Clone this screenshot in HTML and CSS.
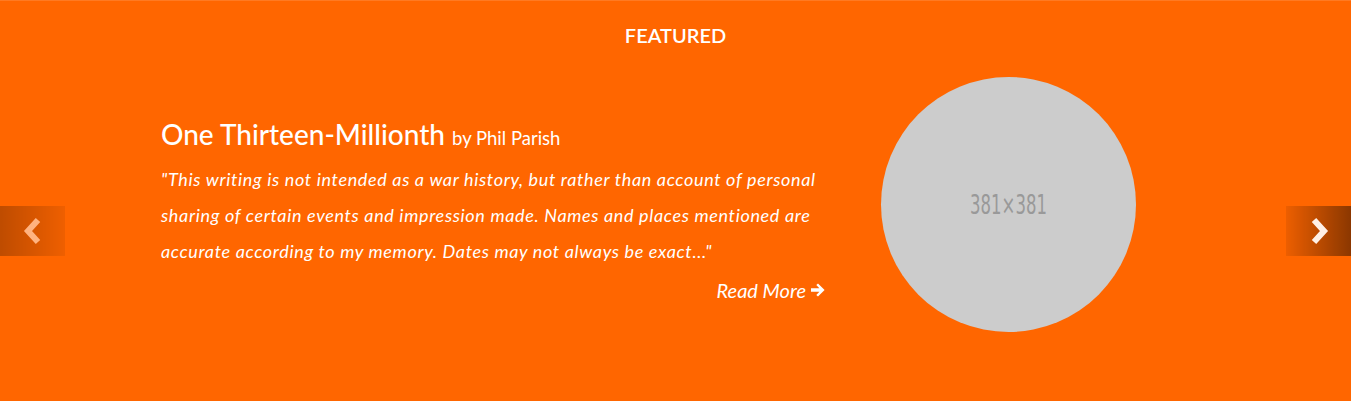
FILE: index.html
```html
<!DOCTYPE html>
<html>
<head>
<meta charset="utf-8">
<link rel="stylesheet" href="styles.css">
</head>
<body>
<section class="featured">
  <h2 class="featured-title">FEATURED</h2>
  <div class="slide">
    <div class="text-col">
      <h3 class="book-title">One Thirteen-Millionth <small>by Phil Parish</small></h3>
      <p class="excerpt">"This writing is not intended as a war history, but rather than account of personal sharing of certain events and impression made. Names and places mentioned are accurate according to my memory. Dates may not always be exact..."</p>
      <div class="more-row"><a class="read-more" href="#">Read More<svg class="arrow" viewBox="0 0 16 16" width="16" height="16"><path d="M1 6.2h8.4L6.3 3.1 8 1.4 14.6 8 8 14.6 6.3 12.9l3.1-3.1H1z" fill="#fff"/></svg></a></div>
    </div>
    <div class="img-col">
      <div class="circle"><span>381×381</span></div>
    </div>
  </div>
  <a class="control left" href="#"><svg viewBox="0 0 20 28" width="20" height="28"><path d="M15 3 L5 14 L15 25" fill="none" stroke="#fff" stroke-width="6" stroke-linejoin="miter"/></svg></a>
  <a class="control right" href="#"><svg viewBox="0 0 20 28" width="20" height="28"><path d="M5 3 L15 14 L5 25" fill="none" stroke="#fff" stroke-width="6" stroke-linejoin="miter"/></svg></a>
</section>
</body>
</html>
```
FILE: styles.css
```css
html, body {
  margin: 0;
  padding: 0;
  background: #ff6600;
}
.featured {
  position: relative;
  height: 401px;
  box-sizing: border-box;
  background: #ff6600;
  color: #fff;
  font-family: Lato, "Noto Sans", sans-serif;
  border-top: 1px solid #ff7a22;
  overflow: hidden;
}
.featured-title {
  margin: 0;
  padding-top: 22px;
  text-align: center;
  font-size: 20px;
  font-weight: 600;
  line-height: 24px;
}
.slide {
  display: flex;
  align-items: flex-start;
  margin-top: 30px;
}
.text-col {
  margin-left: 161px;
  width: 665px;
  padding-top: 40px;
}
.book-title {
  margin: 0;
  font-size: 28px;
  font-weight: 500;
  line-height: 34px;
}
.book-title small {
  font-size: 18.5px;
  font-weight: 400;
}
.excerpt {
  margin: 6px 0 0;
  font-size: 18px;
  letter-spacing: 0.65px;
  font-style: italic;
  line-height: 36px;
}
.more-row {
  display: flex;
  justify-content: flex-end;
  margin-top: 9px;
}
.read-more {
  color: #fff;
  text-decoration: none;
  font-style: italic;
  font-size: 20px;
  display: inline-flex;
  align-items: center;
  gap: 4px;
}
.img-col {
  margin-left: 55px;
}
.circle {
  width: 255px;
  height: 255px;
  border-radius: 50%;
  background: #cccccc;
  display: flex;
  align-items: center;
  justify-content: center;
}
.circle span {
  color: #999999;
  font-family: "DejaVu Sans Condensed", "DejaVu Sans", sans-serif;
  font-stretch: condensed;
  font-size: 27px;
  transform: scaleX(0.68);
}
.control {
  position: absolute;
  top: 205px;
  width: 65px;
  height: 50px;
  display: flex;
  align-items: center;
  justify-content: center;
}
.control.left {
  left: 0;
  opacity: 0.5;
  background: linear-gradient(to right, rgba(0,0,0,0.5), rgba(0,0,0,0.12));
}
.control.right {
  right: 0;
  opacity: 0.9;
  background: linear-gradient(to right, rgba(0,0,0,0.08), rgba(0,0,0,0.5));
}
```
